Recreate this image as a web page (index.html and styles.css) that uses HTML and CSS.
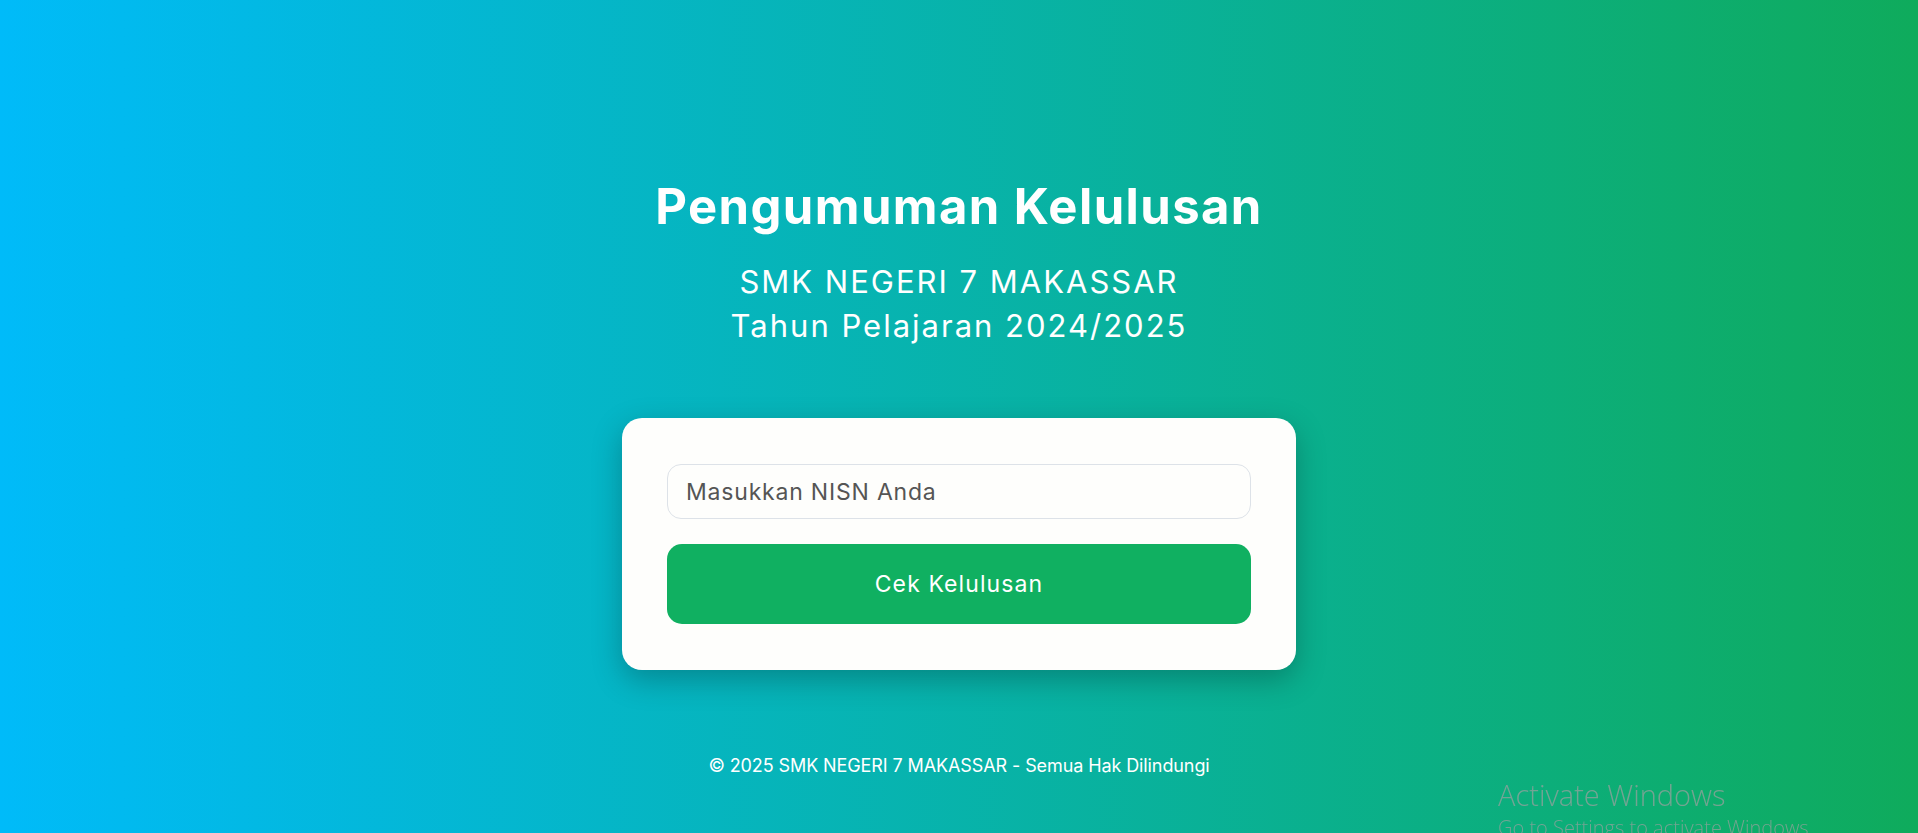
FILE: index.html
```html
<!DOCTYPE html>
<html lang="id">
<head>
    <meta charset="UTF-8">
    <meta name="viewport" content="width=device-width, initial-scale=1.0">
    <title>Pengumuman Kelulusan - SMK NEGERI 7 MAKASSAR</title>
    <link rel="stylesheet" href="styles.css">
</head>
<body>
    <div class="page">
        <h1 class="title">Pengumuman Kelulusan</h1>
        <p class="subtitle">SMK NEGERI 7 MAKASSAR<br>Tahun Pelajaran 2024/2025</p>

        <form class="card" onsubmit="return false;">
            <input type="text" class="nisn-input" placeholder="Masukkan NISN Anda">
            <button type="submit" class="check-button">Cek Kelulusan</button>
        </form>

        <footer class="footer">&copy; 2025 SMK NEGERI 7 MAKASSAR - Semua Hak Dilindungi</footer>
    </div>

    <div class="watermark">
        <div class="watermark-title">Activate Windows</div>
        <div class="watermark-sub">Go to Settings to activate Windows.</div>
    </div>
</body>
</html>
```

FILE: styles.css
```css
html, body { height: 100%; }
body {
    margin: 0;
    overflow: hidden;
    font-family: "Inter", "DejaVu Sans", sans-serif;
    color: #fff;
    background: linear-gradient(to right, #00bbf9, #0fab5c);
}
.page {
    display: flex;
    flex-direction: column;
    align-items: center;
    padding-top: 178px;
    text-align: center;
}
.title {
    margin: 0;
    font-size: 49px;
    font-weight: 700;
    line-height: 58px;
    letter-spacing: 1.4px;
}
.subtitle {
    margin: 24px 0 0;
    font-size: 31px;
    font-weight: 400;
    line-height: 44px;
    letter-spacing: 2px;
}
.card {
    box-sizing: border-box;
    width: 674px;
    margin-top: 70px;
    padding: 46px 45px;
    display: flex;
    flex-direction: column;
    gap: 25px;
    background-color: #fefefc;
    border-radius: 20px;
    box-shadow: 0 10px 30px rgba(0, 0, 0, 0.25);
}
.nisn-input {
    box-sizing: border-box;
    height: 55px;
    padding: 0 18px;
    font-family: inherit;
    font-size: 23px;
    letter-spacing: 0.8px;
    color: #333;
    background: transparent;
    border: 1px solid #dde2e8;
    border-radius: 14px;
    outline: none;
}
.nisn-input::placeholder { color: #555; }
.check-button {
    height: 80px;
    font-family: inherit;
    font-size: 23px;
    letter-spacing: 1.1px;
    color: #fff;
    background-color: #10b061;
    border: none;
    border-radius: 15px;
    cursor: pointer;
}
.footer {
    margin-top: 82px;
    font-size: 18px;
    line-height: 27px;
    letter-spacing: -0.1px;
}
.watermark {
    position: fixed;
    left: 1498px;
    top: 775px;
    color: rgba(160, 160, 160, 0.7);
    font-family: "Open Sans", "DejaVu Sans", sans-serif;
    text-align: left;
    pointer-events: none;
}
.watermark-title { font-size: 29px; font-weight: 300; line-height: 40px; }
.watermark-sub { font-size: 20px; font-weight: 300; line-height: 26px; }
```
